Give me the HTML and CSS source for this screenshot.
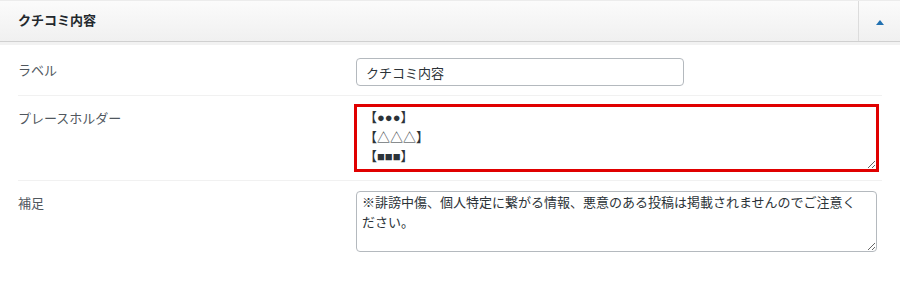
FILE: index.html
```html
<!DOCTYPE html>
<html lang="ja">
  <head>
    <meta charset="UTF-8" />
    <meta name="viewport" content="width=device-width, initial-scale=1.0" />
    <title>クチコミ内容</title>
    <link rel="stylesheet" href="styles.css">
  </head>
  <body>
    <div class="postbox">
      <div class="postbox-header">
        <h2 class="postbox-title">クチコミ内容</h2>
        <button type="button" class="toggle" aria-label="閉じる"><span class="toggle-arrow"></span></button>
      </div>
      <div class="inside">
        <div class="field">
          <label class="field-label" for="label">ラベル</label>
          <div class="field-input">
            <input type="text" id="label" class="text-input" value="クチコミ内容" />
          </div>
        </div>
        <div class="field">
          <label class="field-label" for="placeholder">プレースホルダー</label>
          <div class="field-input">
            <textarea id="placeholder" class="textarea textarea-tall highlight">【●●●】
【△△△】
【■■■】</textarea>
          </div>
        </div>
        <div class="field">
          <label class="field-label" for="note">補足</label>
          <div class="field-input">
            <textarea id="note" class="textarea">※誹謗中傷、個人特定に繋がる情報、悪意のある投稿は掲載されませんのでご注意ください。</textarea>
          </div>
        </div>
      </div>
    </div>
  </body>
</html>
```

FILE: styles.css
```css
body {
  margin: 0;
  padding: 0;
  background: #fff;
  font-family: "Liberation Sans", "Noto Sans CJK JP", sans-serif;
  font-size: 13px;
  color: #3c434a;
}
.postbox {
  width: 900px;
}
.postbox-header {
  display: flex;
  align-items: stretch;
  height: 42px;
  box-sizing: border-box;
  background: linear-gradient(#fbfbfb, #f0f0f0);
  border-top: 1px solid #ececec;
  border-bottom: 1px solid #d0d0d0;
  box-shadow: 0 3px 0 #f2f2f2;
}
.postbox-title {
  flex: 1;
  margin: 0;
  padding-left: 18px;
  font-size: 13px;
  font-weight: bold;
  line-height: 40px;
  color: #23282d;
}
.toggle {
  width: 42px;
  padding: 0;
  border: none;
  border-left: 1px solid #dcdcdc;
  background: transparent;
  display: flex;
  justify-content: center;
  align-items: center;
  cursor: pointer;
}
.toggle-arrow {
  width: 0;
  height: 0;
  border-left: 4px solid transparent;
  border-right: 4px solid transparent;
  border-bottom: 5px solid #2271b1;
  margin-top: 3px;
}
.inside {
  padding: 6px 18px 0;
}
.field {
  display: grid;
  grid-template-columns: 338px 1fr;
  padding: 10px 0;
  border-top: 1px solid #f1f1f1;
}
.field:first-child {
  border-top: none;
  padding-bottom: 9px;
}
.field-label {
  padding-top: 3px;
  line-height: 20px;
  color: #50575e;
}
.text-input {
  display: block;
  width: 328px;
  height: 28px;
  box-sizing: border-box;
  padding: 0 9px;
  border: 1px solid #b4b9be;
  border-radius: 4px;
  font-family: inherit;
  font-size: 13px;
  color: #2c3338;
}
.textarea {
  display: block;
  width: calc(100% - 5px);
  height: 61px;
  box-sizing: border-box;
  padding: 1px 12px 1px 5px;
  border: 1px solid #b4b9be;
  border-radius: 4px;
  font-family: inherit;
  font-size: 13px;
  line-height: 19.5px;
  color: #2c3338;
}
.textarea-tall {
  height: 64px;
  padding-left: 7px;
}
.highlight {
  outline: 3px solid #e00000;
  outline-offset: -1px;
  border-radius: 0;
}
```
